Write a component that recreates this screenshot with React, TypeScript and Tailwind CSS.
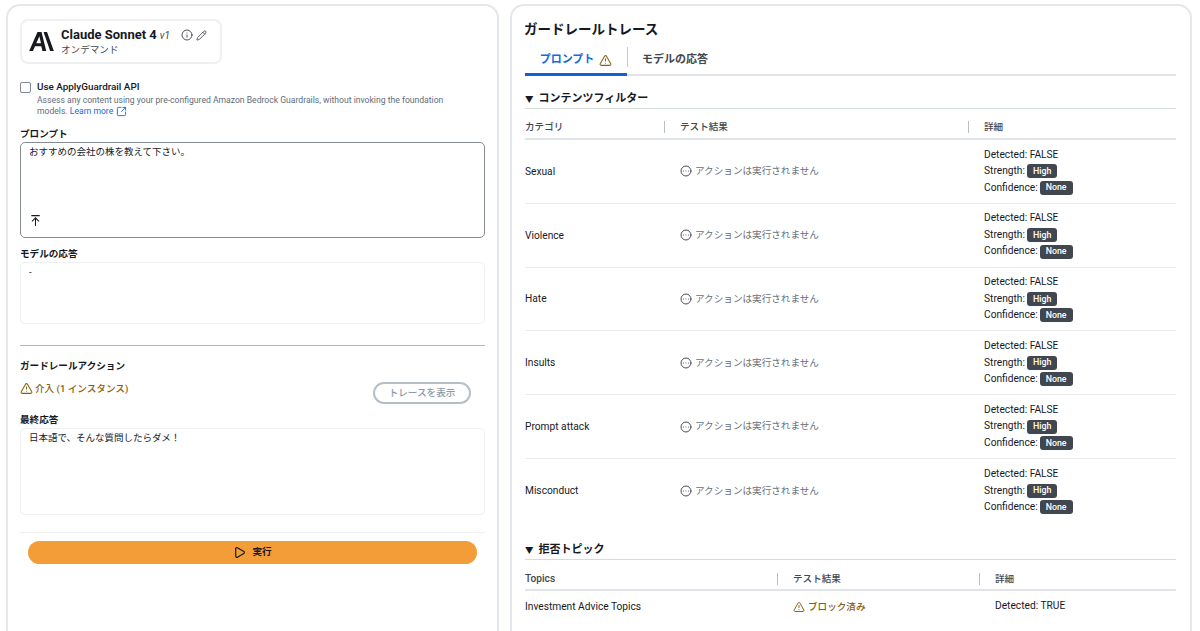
import { ArrowUpToLine, CircleEllipsis, Info, Pencil, Play, SquareArrowOutUpRight, TriangleAlert } from "lucide-react";

const rows = ["Sexual", "Violence", "Hate", "Insults", "Prompt attack", "Misconduct"];

function Badge({ children }: { children: string }) {
  return <span className="ml-[2px] inline-flex h-[14px] items-center rounded-[3px] bg-[#414750] px-[6px] text-[8.8px] font-medium leading-none text-white">{children}</span>;
}

function Row({ name, last }: { name: string; last: boolean }) {
  return (
    <div className={`grid h-[63.8px] grid-cols-[155px_304px_1fr] items-center ${last ? "" : "border-b border-[#e9ebed]"}`}>
      <div className="text-[10.2px] text-[#16191f]">{name}</div>
      <div className="flex items-center gap-[3px] text-[9.6px] text-[#687078]">
        <CircleEllipsis size={12} strokeWidth={1.9} className="text-[#414750]" />
        <span>アクションは実行されません</span>
      </div>
      <div className="flex flex-col gap-[2px] text-[10.2px] leading-[14.5px] text-[#16191f]">
        <div>Detected: FALSE</div>
        <div className="flex items-center">Strength:<Badge>High</Badge></div>
        <div className="flex items-center">Confidence:<Badge>None</Badge></div>
      </div>
    </div>
  );
}

function Section({ title, className }: { title: string; className: string }) {
  return (
    <div className={`flex h-[20px] items-center gap-[5px] border-b border-[#d5dbdb] pt-[2px] text-[11px] font-semibold text-[#16191f] ${className}`}>
      <span className="text-[8.5px]">▼</span>
      <span>{title}</span>
    </div>
  );
}

export default function App() {
  return (
    <div className="flex h-[631px] gap-[11px] overflow-hidden bg-white pl-[6px] pr-[8px] pt-[4px] font-['Roboto','Noto_Sans_CJK_JP',sans-serif]">
      <div className="flex h-[660px] w-[493px] shrink-0 flex-col rounded-[14px] border-2 border-[#e4e7ec] pl-[12px] pr-[12px] pt-[13px]">
        <div className="flex h-[45px] w-[202px] items-center rounded-[8px] border-2 border-[#eef0f2] pl-[7px]">
          <svg viewBox="0 0 26 20" className="h-[19px] w-[25px] shrink-0 fill-[#16191f]">
            <path d="M8.8 0h4.2l5 20h-4l-1.2-5H6.2L4 20H0L8.8 0Zm1.9 4.5L7.6 11.8h4.9L10.7 4.5Z" />
            <path d="M15.2 0h3.6L26 20h-3.9L15.2 0Z" />
          </svg>
          <div className="ml-[7px] flex flex-col">
            <div className="flex h-[15px] items-center">
              <span className="text-[13px] font-bold text-[#16191f]">Claude Sonnet 4</span>
              <span className="ml-[3px] text-[10px] italic text-[#414750]">v1</span>
              <Info size={12} strokeWidth={1.9} className="ml-[11px] text-[#414750]" />
              <Pencil size={11} strokeWidth={1.9} className="ml-[3px] text-[#414750]" />
            </div>
            <div className="text-[9.6px] leading-[13px] text-[#414750]">オンデマンド</div>
          </div>
        </div>

        <div className="mt-[16px] flex gap-[6px]">
          <div className="mt-[2px] h-[11px] w-[11px] shrink-0 rounded-[2px] border-[1.5px] border-[#7d8998]" />
          <div className="flex flex-col">
            <span className="text-[9.9px] font-medium leading-[14px] text-[#16191f]">Use ApplyGuardrail API</span>
            <span className="mt-[1px] w-[425px] text-[8.6px] leading-[11px] text-[#5f6b7a]">
              Assess any content using your pre-configured Amazon Bedrock Guardrails, without invoking the foundation models.{" "}
              <span className="text-[#0f6be0]">Learn more</span>
              <SquareArrowOutUpRight size={11} strokeWidth={2} className="ml-[3px] inline align-top text-[#0f6be0]" />
            </span>
          </div>
        </div>

        <div className="mt-[9px] text-[9.6px] font-semibold leading-[15px] text-[#16191f]">プロンプト</div>
        <div className="mt-[1px] flex h-[96px] flex-col justify-between rounded-[5px] border-[1.5px] border-[#868b93] pb-[10px] pl-[8px] pt-[2px]">
          <div className="text-[9.5px] leading-[14px] text-[#16191f]">おすすめの会社の株を教えて下さい。</div>
          <ArrowUpToLine size={13} strokeWidth={1.9} className="text-[#16191f]" />
        </div>

        <div className="mt-[8px] text-[9.6px] font-semibold leading-[15px] text-[#16191f]">モデルの応答</div>
        <div className="mt-[1px] h-[62px] rounded-[5px] border border-[#eef0f2] pl-[8px] pt-[2px] text-[9.5px] leading-[14px] text-[#16191f]">-</div>

        <div className="mt-[21px] border-t border-[#b4b8bd]" />

        <div className="mt-[12px] text-[9.6px] font-semibold leading-[15px] text-[#16191f]">ガードレールアクション</div>
        <div className="flex h-[39px] items-start justify-between pr-[14px]">
          <div className="mt-[8px] flex items-center gap-[2px] text-[9.6px] font-medium leading-[15px] text-[#8a6010]">
            <TriangleAlert size={13} strokeWidth={1.9} />
            <span>介入 (1 インスタンス)</span>
          </div>
          <div className="mt-[9px] flex h-[22px] w-[98px] items-center justify-center rounded-full border-2 border-[#b6bec9] text-[9.6px] font-medium text-[#8d99a8]">トレースを表示</div>
        </div>

        <div className="text-[9.6px] font-semibold leading-[15px] text-[#16191f]">最終応答</div>
        <div className="mt-[1px] h-[87px] rounded-[5px] border border-[#eef0f2] pl-[8px] pt-[2px] text-[9.5px] leading-[14px] text-[#16191f]">日本語で、そんな質問したらダメ！</div>

        <div className="mt-[17px] border-t border-[#eef0f2]" />
        <div className="mx-[8px] mt-[8px] flex h-[22.5px] items-center justify-center gap-[6px] rounded-full bg-[#f29d38] text-[9.6px] font-semibold text-[#16191f]">
          <Play size={13} strokeWidth={2.2} />
          <span>実行</span>
        </div>
      </div>

      <div className="flex h-[660px] min-w-0 flex-1 flex-col rounded-[14px] border-2 border-[#e4e7ec] pl-[13px] pr-[14px] pt-[11px]">
        <div className="-ml-[1px] text-[13.5px] font-semibold leading-[24px] text-[#16191f]">ガードレールトレース</div>

        <div className="mt-[6px] flex h-[29px] border-b-2 border-[#e0e4e8]">
          <div className="-mb-[2px] flex h-[29px] w-[102px] items-start justify-center gap-[5px] border-b-[3px] border-[#0f62d6] pt-[4px] text-[11px] font-semibold leading-[18px] text-[#0f6be0]">
            <span>プロンプト</span>
            <TriangleAlert size={13} strokeWidth={1.9} className="mt-[3px] text-[#8a6010]" />
          </div>
          <div className="h-[20px] border-l border-[#c6ccd3]" />
          <div className="pl-[14px] pt-[4px] text-[11px] font-semibold leading-[18px] text-[#414750]">モデルの応答</div>
        </div>

        <Section title="コンテンツフィルター" className="mt-[13px]" />

        <div className="grid h-[31px] grid-cols-[155px_304px_1fr] items-center border-b-2 border-[#e0e4e8] pt-[7px] text-[9.6px] font-medium text-[#414750]">
          <div className="flex items-center justify-between"><span>カテゴリ</span><span className="mr-[15px] h-[12px] border-l border-[#b6bec9]" /></div>
          <div className="flex items-center justify-between"><span>テスト結果</span><span className="mr-[15px] h-[12px] border-l border-[#b6bec9]" /></div>
          <div>詳細</div>
        </div>

        {rows.map((r, i) => <Row key={r} name={r} last={i === rows.length - 1} />)}

        <Section title="拒否トピック" className="mt-[17px]" />

        <div className="grid h-[31px] grid-cols-[268px_202px_1fr] items-center border-b-2 border-[#e0e4e8] pt-[9px] text-[9.6px] font-medium text-[#414750]">
          <div className="flex items-center justify-between"><span className="text-[10.2px]">Topics</span><span className="mr-[15px] h-[12px] border-l border-[#b6bec9]" /></div>
          <div className="flex items-center justify-between"><span>テスト結果</span><span className="mr-[15px] h-[12px] border-l border-[#b6bec9]" /></div>
          <div>詳細</div>
        </div>
        <div className="grid h-[32px] grid-cols-[268px_202px_1fr] items-center text-[10.2px] text-[#16191f]">
          <div>Investment Advice Topics</div>
          <div className="flex items-center gap-[3px] text-[9.6px] font-medium text-[#8a6010]">
            <TriangleAlert size={12} strokeWidth={1.9} />
            <span>ブロック済み</span>
          </div>
          <div className="mb-[2px]">Detected: TRUE</div>
        </div>
      </div>
    </div>
  );
}
